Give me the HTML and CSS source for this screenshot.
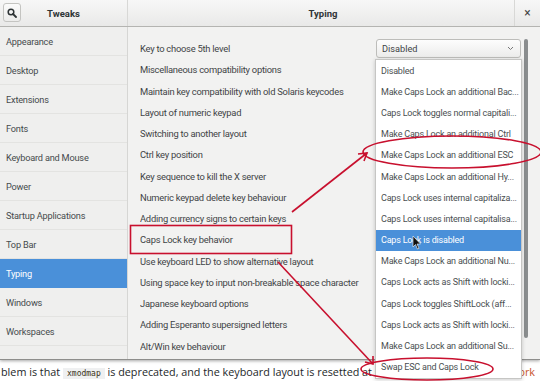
FILE: index.html
```html
<!DOCTYPE html>
<html lang="en">
<head>
<meta charset="UTF-8">
<title>Tweaks - Typing</title>
<link rel="stylesheet" href="styles.css">
</head>
<body>

<div class="window">
    <header class="titlebar">
        <div class="tb-left">
            <span class="search-btn">
                <svg width="10" height="10" viewBox="0 0 10 10">
                    <circle cx="4" cy="4" r="2.8" fill="none" stroke="#2e3436" stroke-width="1.5"/>
                    <line x1="6" y1="6" x2="9" y2="9" stroke="#2e3436" stroke-width="1.8" stroke-linecap="round"/>
                </svg>
            </span>
            <span class="tb-title">Tweaks</span>
        </div>
        <div class="tb-right"><span class="tb-title">Typing</span></div>
        <div class="tb-close">&times;</div>
    </header>

    <div class="body">
        <nav class="sidebar">
            <div class="side-row">Appearance</div>
            <div class="side-row">Desktop</div>
            <div class="side-row">Extensions</div>
            <div class="side-row">Fonts</div>
            <div class="side-row">Keyboard and Mouse</div>
            <div class="side-row">Power</div>
            <div class="side-row">Startup Applications</div>
            <div class="side-row">Top Bar</div>
            <div class="side-row selected">Typing</div>
            <div class="side-row">Windows</div>
            <div class="side-row">Workspaces</div>
        </nav>

        <main class="content">
            <div class="list">
                <div class="opt-row">
                    <span>Key to choose 5th level</span>
                    <span class="combo">Disabled
                        <svg width="7" height="5" viewBox="0 0 7 5"><polyline points="1,1 3.5,3.5 6,1" fill="none" stroke="#777" stroke-width="1"/></svg>
                    </span>
                </div>
                <div class="opt-row">Miscellaneous compatibility options</div>
                <div class="opt-row">Maintain key compatibility with old Solaris keycodes</div>
                <div class="opt-row">Layout of numeric keypad</div>
                <div class="opt-row">Switching to another layout</div>
                <div class="opt-row">Ctrl key position</div>
                <div class="opt-row">Key sequence to kill the X server</div>
                <div class="opt-row">Numeric keypad delete key behaviour</div>
                <div class="opt-row">Adding currency signs to certain keys</div>
                <div class="opt-row">Caps Lock key behavior</div>
                <div class="opt-row">Use keyboard LED to show alternative layout</div>
                <div class="opt-row">Using space key to input non-breakable space character</div>
                <div class="opt-row">Japanese keyboard options</div>
                <div class="opt-row">Adding Esperanto supersigned letters</div>
                <div class="opt-row">Alt/Win key behaviour</div>
            </div>
            <div class="scrollbar"></div>
        </main>
    </div>
</div>

<p class="post">
    <span>blem is that <code>xmodmap</code> is deprecated, and the keyboard layout is resetted at strange time.</span>
    <a class="post-link">work</a>
</p>

<ul class="menu">
    <li>Disabled</li>
    <li>Make Caps Lock an additional Bac...</li>
    <li>Caps Lock toggles normal capitali...</li>
    <li>Make Caps Lock an additional Ctrl</li>
    <li>Make Caps Lock an additional ESC</li>
    <li>Make Caps Lock an additional Hy...</li>
    <li>Caps Lock uses internal capitaliza...</li>
    <li>Caps Lock uses internal capitalisa...</li>
    <li class="active">Caps Lock is disabled</li>
    <li>Make Caps Lock an additional Nu...</li>
    <li>Caps Lock acts as Shift with locki...</li>
    <li>Caps Lock toggles ShiftLock (aff...</li>
    <li>Caps Lock acts as Shift with locki...</li>
    <li>Make Caps Lock an additional Su...</li>
    <li>Swap ESC and Caps Lock</li>
</ul>

<!-- hand drawn annotations over the screenshot -->
<svg class="marks" width="540" height="381" viewBox="0 0 540 381">
    <g fill="none" stroke="#c8102e" stroke-width="1.6">
        <rect x="130.5" y="225.5" width="161" height="28"/>
        <ellipse cx="452" cy="152" rx="89" ry="16"/>
        <ellipse cx="427" cy="369" rx="66" ry="11"/>
        <line x1="292" y1="212" x2="367" y2="153"/>
        <polyline points="358,154 367,153 364,161"/>
        <line x1="278" y1="262" x2="373" y2="364"/>
        <polyline points="365,362 373,364 373,356"/>
    </g>
    <path d="M413 236 L413 247 L415.5 244.5 L417.5 249 L419 248.3 L417 244 L420.5 244 Z" fill="#111" stroke="#fff" stroke-width="0.6"/>
</svg>

</body>
</html>
```

FILE: styles.css
```css
body {
    margin: 0;
    padding: 0;
    width: 540px;
    height: 381px;
    overflow: hidden;
    position: relative;
    background-color: #fff;
    font-family: Roboto, "Liberation Sans", sans-serif;
    color: #3c4144;
}

.window {
    height: 359px;
    display: flex;
    flex-direction: column;
    background-color: #f2f2f1;
    border-bottom: 1px solid #8e8e8c;
    box-shadow: 0 1px 3px rgba(0, 0, 0, 0.35);
}

/* header bar */
.titlebar {
    height: 26px;
    display: flex;
    background: linear-gradient(#f7f7f7, #e9e9e8);
    border-bottom: 1px solid #b4b4b1;
    flex-shrink: 0;
}

.tb-left {
    width: 127px;
    position: relative;
    display: flex;
    align-items: center;
    justify-content: center;
    border-right: 1px solid #d8d8d6;
}

.search-btn {
    position: absolute;
    left: 3px;
    top: 3px;
    width: 18px;
    height: 19px;
    box-sizing: border-box;
    border: 1px solid #c4c4c1;
    border-radius: 3px;
    background: linear-gradient(#fbfbfb, #ececeb);
    display: flex;
    align-items: center;
    justify-content: center;
}

.tb-title {
    font-size: 9.5px;
    font-weight: bold;
    color: #2e3436;
}

.tb-right {
    flex: 1;
    display: flex;
    align-items: center;
    justify-content: center;
    padding-left: 4px;
    border-right: 1px solid #d8d8d6;
}

.tb-close {
    width: 25px;
    display: flex;
    align-items: center;
    justify-content: center;
    font-size: 12px;
    color: #444;
}

.body {
    flex: 1;
    display: flex;
    min-height: 0;
}

/* sidebar */
.sidebar {
    width: 127px;
    flex-shrink: 0;
    background-color: #efefee;
    border-right: 1px solid #d6d6d4;
}

.side-row {
    height: 29px;
    box-sizing: border-box;
    padding-left: 6px;
    display: flex;
    align-items: center;
    font-size: 9.2px;
    letter-spacing: -0.2px;
    color: #464b4d;
    border-bottom: 1px solid #e3e3e1;
}

.side-row.selected {
    background-color: #4a90d9;
    color: #fff;
    border-bottom-color: #4a90d9;
}

/* main list */
.content {
    flex: 1;
    position: relative;
    padding: 11px 19px 9px 12px;
    display: flex;
    flex-direction: column;
}

.list {
    flex: 1;
    overflow: hidden;
}

.opt-row {
    height: 21.25px;
    display: flex;
    align-items: center;
    justify-content: space-between;
    font-size: 9.4px;
    letter-spacing: -0.25px;
    color: #3f4446;
    white-space: nowrap;
}

.combo {
    width: 145px;
    height: 19px;
    box-sizing: border-box;
    padding: 0 6px 0 5px;
    display: flex;
    align-items: center;
    justify-content: space-between;
    border: 1px solid #bdbdba;
    border-radius: 3px;
    background: linear-gradient(#fdfdfd, #ececeb);
    font-size: 9.2px;
    letter-spacing: 0;
}

.scrollbar {
    position: absolute;
    right: 12px;
    top: 12px;
    width: 4px;
    height: 299px;
    background-color: #8a8d8e;
    border-radius: 2px;
}

/* page text under the picture */
.post {
    margin: 0;
    padding: 4px 5px 0 1px;
    display: flex;
    justify-content: space-between;
    font-family: "Open Sans", "DejaVu Sans", sans-serif;
    font-size: 10.8px;
    color: #242729;
    white-space: nowrap;
}

.post code {
    font-family: "DejaVu Sans Mono", "Liberation Mono", monospace;
    font-size: 8px;
    background-color: #eff0f1;
    padding: 1px 4px;
    color: #393318;
}

.post-link {
    color: #c8542c;
}

/* open dropdown */
.menu {
    position: absolute;
    left: 375px;
    top: 59px;
    width: 147px;
    margin: 0;
    padding: 0;
    list-style: none;
    box-sizing: border-box;
    background-color: #fff;
    border: 1px solid #c6c6c4;
    box-shadow: 0 1px 4px rgba(0, 0, 0, 0.2);
}

.menu li {
    height: 21.2px;
    padding-left: 5px;
    display: flex;
    align-items: center;
    font-size: 9px;
    letter-spacing: -0.2px;
    color: #4a4f51;
    white-space: nowrap;
    overflow: hidden;
}

.menu li.active {
    background-color: #4a90d9;
    color: #fff;
}

.marks {
    position: absolute;
    left: 0;
    top: 0;
    pointer-events: none;
}
```
